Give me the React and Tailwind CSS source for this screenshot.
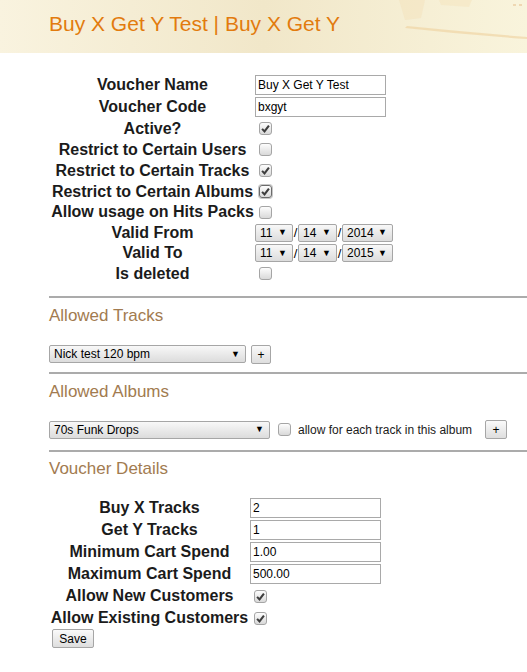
import React from 'react';

const Check = ({ checked, focus, className = '' }) => (
  <span
    className={`inline-flex h-[13px] w-[13px] items-center justify-center rounded-[3px] border bg-gradient-to-b from-[#fdfdfd] to-[#d9d9d9] ${
      focus ? 'border-[#6b6b6b] shadow-[0_0_0_1px_#c8c8c8]' : 'border-[#a5a5a5]'
    } ${className}`}
  >
    {checked && (
      <svg viewBox="0 0 10 10" className="h-[9px] w-[9px]">
        <path d="M1.2 5.4 L3.9 8.2 L8.8 1.8" fill="none" stroke="#3d3d3d" strokeWidth="2.3" />
      </svg>
    )}
  </span>
);

const Select = ({ value, className = '' }) => (
  <span
    className={`flex h-[18px] items-center justify-between rounded-[2px] border border-[#a6a6a6] bg-gradient-to-b from-[#f8f8f8] to-[#dcdcdc] pl-[4px] pr-[5px] text-[12px] leading-none text-black ${className}`}
  >
    <span>{value}</span>
    <span className="text-[9px]">▼</span>
  </span>
);

const Btn = ({ children, className = '' }) => (
  <button
    className={`flex h-[19px] items-center justify-center rounded-[2px] border border-[#a6a6a6] bg-gradient-to-b from-[#fafafa] to-[#dedede] text-[12px] leading-none text-black ${className}`}
  >
    {children}
  </button>
);

const TextInput = ({ value }) => (
  <input
    readOnly
    value={value}
    className="ml-[1px] h-[20px] w-[131px] border border-[#a9a9a9] bg-white px-[2px] text-[12px] text-black outline-none"
  />
);

const Row = ({ label, h, cols, children }) => (
  <div className={`grid items-center ${cols} ${h}`}>
    <span className="text-center text-[16px] font-bold leading-[18px] text-[#1b1b1b]">{label}</span>
    <div className="flex items-center">{children}</div>
  </div>
);

const Hr = ({ className = '' }) => <div className={`h-[2px] bg-[#ababab] ${className}`} />;

const Heading = ({ children, className = '' }) => (
  <h2 className={`text-[17px] font-normal leading-[20px] text-[#a27b50] ${className}`}>{children}</h2>
);

const DateSel = ({ year }) => (
  <div className="ml-[1px] flex items-center text-[13px] text-black">
    <Select value="11" className="h-[17px] w-[38px]" />
    <span className="w-[5px] text-center leading-none">/</span>
    <Select value="14" className="h-[17px] w-[39px]" />
    <span className="w-[5px] text-center leading-none">/</span>
    <Select value={year} className="h-[17px] w-[51px]" />
  </div>
);

export default function App() {
  const c1 = 'grid-cols-[203px_1fr]';
  const c2 = 'grid-cols-[199px_1fr]';

  return (
    <div className="min-h-[672px] w-[527px] bg-white font-['Liberation_Sans',Arial,sans-serif]">
      {/* Header */}
      <div className="relative h-[53px] overflow-hidden bg-gradient-to-r from-[#f9f3df] via-[#f1e7c9] to-[#f9f4dc] pl-[49px] pt-[12px]">
        <svg className="absolute right-0 top-0 h-[53px] w-[150px]" viewBox="0 0 150 53">
          <path d="M22 0 L48 0 L44 18 L28 20 Z" fill="#f3e2bb" opacity="0.5" />
          <path d="M62 0 L95 0 L92 7 L64 5 Z" fill="#f3e2bb" opacity="0.45" />
          <path d="M30 26 Q90 32 150 37 L150 39 Q90 35 28 28 Z" fill="#efd09c" opacity="0.6" />
          <rect x="136" y="4" width="3" height="2" fill="#e7c596" opacity="0.6" />
          <rect x="142" y="4" width="3" height="2" fill="#e7c596" opacity="0.6" />
        </svg>
        <h1 className="relative text-[21px] font-normal leading-[24px] text-[#e27b0e]">
          Buy X Get Y Test | Buy X Get Y
        </h1>
      </div>

      {/* Voucher settings */}
      <div className="mt-[21px] pl-[51px]">
        <Row label="Voucher Name" h="h-[22px]" cols={c1}>
          <TextInput value="Buy X Get Y Test" />
        </Row>
        <Row label="Voucher Code" h="h-[22px]" cols={c1}>
          <TextInput value="bxgyt" />
        </Row>
        <Row label="Active?" h="h-[21px]" cols={c1}>
          <Check checked className="ml-[5px]" />
        </Row>
        <Row label="Restrict to Certain Users" h="h-[21px]" cols={c1}>
          <Check className="ml-[5px]" />
        </Row>
        <Row label="Restrict to Certain Tracks" h="h-[21px]" cols={c1}>
          <Check checked className="ml-[5px]" />
        </Row>
        <Row label="Restrict to Certain Albums" h="h-[21px]" cols={c1}>
          <Check checked focus className="ml-[5px]" />
        </Row>
        <Row label="Allow usage on Hits Packs" h="h-[20px]" cols={c1}>
          <Check className="ml-[5px]" />
        </Row>
        <Row label="Valid From" h="h-[21px]" cols={c1}>
          <DateSel year="2014" />
        </Row>
        <Row label="Valid To" h="h-[20px]" cols={c1}>
          <DateSel year="2015" />
        </Row>
        <Row label="Is deleted" h="h-[21px]" cols={c1}>
          <Check className="ml-[5px]" />
        </Row>
      </div>

      <div className="pl-[49px]">
        <Hr className="mt-[12px]" />

        {/* Allowed Tracks */}
        <Heading className="mt-[8px]">Allowed Tracks</Heading>
        <div className="mt-[19px] flex items-start gap-[5px]">
          <Select value="Nick test 120 bpm" className="w-[197px]" />
          <Btn className="w-[20px]">+</Btn>
        </div>
        <Hr className="mt-[8px]" />

        {/* Allowed Albums */}
        <Heading className="mt-[8px]">Allowed Albums</Heading>
        <div className="mt-[18px] flex h-[19px] items-center">
          <Select value="70s Funk Drops" className="w-[221px]" />
          <Check className="ml-[8px] rounded-[3px]" />
          <span className="ml-[7px] text-[12px] leading-none text-[#1b1b1b]">allow for each track in this album</span>
          <Btn className="ml-[13px] w-[22px]">+</Btn>
        </div>
        <Hr className="mt-[11px]" />

        {/* Voucher Details */}
        <Heading className="mt-[7px]">Voucher Details</Heading>
      </div>

      <div className="mt-[18px] pl-[50px]">
        <Row label="Buy X Tracks" h="h-[22px]" cols={c2}>
          <TextInput value="2" />
        </Row>
        <Row label="Get Y Tracks" h="h-[22px]" cols={c2}>
          <TextInput value="1" />
        </Row>
        <Row label="Minimum Cart Spend" h="h-[22px]" cols={c2}>
          <TextInput value="1.00" />
        </Row>
        <Row label="Maximum Cart Spend" h="h-[22px]" cols={c2}>
          <TextInput value="500.00" />
        </Row>
        <Row label="Allow New Customers" h="h-[22px]" cols={c2}>
          <Check checked className="ml-[5px]" />
        </Row>
        <Row label="Allow Existing Customers" h="h-[22px]" cols={c2}>
          <Check checked className="ml-[5px]" />
        </Row>
        <Btn className="ml-[2px] w-[42px] text-[12px]">Save</Btn>
      </div>
    </div>
  );
}
